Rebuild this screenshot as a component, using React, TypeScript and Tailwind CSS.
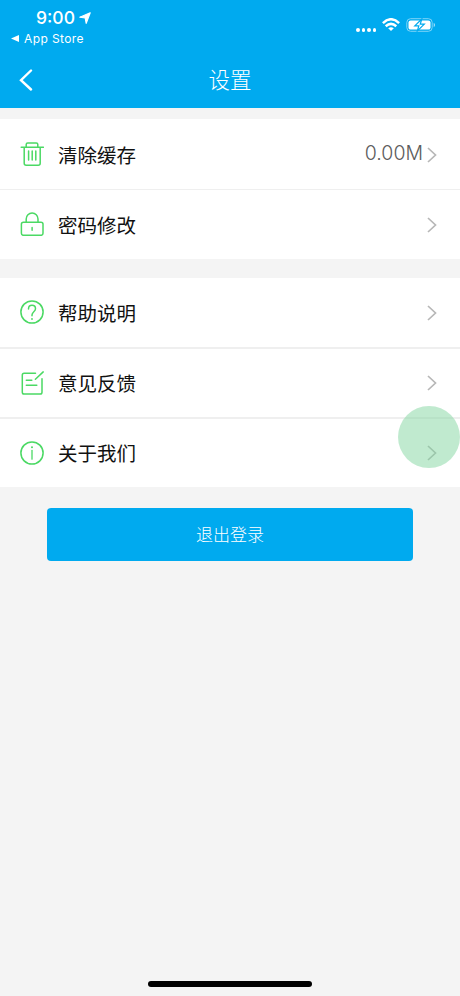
import type { ReactNode } from 'react';

const LocationIcon = () => (
  <svg className="h-[12px] w-[12px]" viewBox="0 0 12 12" fill="#fff">
    <path d="M11.2.8 7.2 11.3 6.2 6 .8 5.2Z" stroke="#fff" strokeWidth="1.2" strokeLinejoin="round" />
  </svg>
);

const WifiIcon = () => (
  <svg className="h-[14px] w-[18px]" viewBox="0 0 18 14" fill="none" stroke="#fff" strokeWidth="2.5">
    <path d="M.9 5.1Q9-2.6 17.1 5.1" />
    <path d="M3.7 8.3Q9 3.5 14.3 8.3" />
    <path d="M6.2 10.3Q9 8 11.8 10.3L9 13.1Z" fill="#fff" stroke="none" />
  </svg>
);

const BatteryIcon = () => (
  <svg className="h-[14px] w-[30px]" viewBox="0 0 30 14" fill="none">
    <rect x=".8" y=".7" width="25.4" height="12.6" rx="3.8" stroke="#7fd4f7" />
    <rect x="2.5" y="2.4" width="22" height="9.2" rx="2.2" fill="#fff" />
    <path d="M27.7 4.8v4.4q1.4-.7 1.4-2.2t-1.4-2.2" fill="#9bdcf8" />
    <path d="m15.8 1-7 6.8h4L11.3 13l7-6.8h-4Z" fill="#fff" stroke="#00aaef" strokeWidth="1.2" />
  </svg>
);

const iconProps = {
  className: 'mb-[1px] h-6 w-6 shrink-0',
  viewBox: '0 0 24 24',
  fill: 'none',
  stroke: '#4bd964',
  strokeWidth: 1.5,
  strokeLinecap: 'round',
  strokeLinejoin: 'round',
} as const;

const TrashIcon = () => (
  <svg {...iconProps}>
    <path d="M1.2 5.3h22.2M6.2 5V2.5q0-1.5 1.5-1.5h8.6q1.5 0 1.5 1.5V5M4.2 5.6v15.6q0 2 2 2h12q2 0 2-2V5.6" />
    <path d="M8.6 9v9M12.2 9v9M15.8 9v9" />
  </svg>
);

const LockIcon = () => (
  <svg {...iconProps}>
    <rect x="1.4" y="10.3" width="21.6" height="13" rx="2" />
    <path d="M6.2 10V6.9a5.9 5.9 0 0 1 11.8 0V10M12.1 15.5v2.7" />
  </svg>
);

const HelpIcon = () => (
  <svg {...iconProps}>
    <circle cx="12" cy="12" r="11.1" />
    <path d="M8.5 8.9c0-2.2 1.5-3.6 3.5-3.6s3.5 1.4 3.5 3.4c0 3-3.5 3.1-3.5 6.3v.7" />
    <circle cx="12" cy="19" r=".9" fill="#4bd964" stroke="none" />
  </svg>
);

const FeedbackIcon = () => (
  <svg {...iconProps}>
    <path d="M15.5 2.2H4.1q-1.8 0-1.8 1.8v17.3q0 1.8 1.8 1.8h16.1q1.8 0 1.8-1.8V7.8" />
    <path d="M23.2.9 15.4 8.2M6.3 9.3h5.5M6.3 14.3h10.5" />
  </svg>
);

const InfoIcon = () => (
  <svg {...iconProps}>
    <circle cx="12" cy="12" r="11.1" />
    <path d="M12 9.5v8.7" strokeWidth="1.3" />
    <circle cx="12" cy="6.2" r="1" fill="#4bd964" stroke="none" />
  </svg>
);

const Chevron = () => (
  <svg className="h-4 w-[10px] shrink-0" viewBox="0 0 10 16" fill="none" stroke="#b7b7b7" strokeWidth="1.7">
    <path d="M1 1 8.5 8 1 15" />
  </svg>
);

type RowProps = {
  icon: ReactNode;
  label: string;
  value?: string;
  className: string;
};

const Row = ({ icon, label, value, className }: RowProps) => (
  <li className={`flex items-center border-[#efefef] bg-white pr-[23px] pl-5 ${className}`}>
    {icon}
    <span className="mt-[2px] ml-[14px] flex-1 text-[19.5px] leading-7 text-[#111]">{label}</span>
    {value && <span className="mt-[-3px] mr-[4px] text-[19.5px] leading-7 font-light text-[#5c5c5c]">{value}</span>}
    <Chevron />
  </li>
);

const App = () => {
  return (
    <div className="relative flex h-[996px] w-[460px] flex-col overflow-hidden bg-[#f4f4f4] font-['Inter','Noto_Sans_CJK_SC',sans-serif]">
      <header className="h-[108px] bg-[#00aaef] text-white">
        <div className="flex h-[52px] justify-between">
          <div className="pt-[7px]">
            <div className="flex items-center gap-[4px] pl-[36px]">
              <span className="text-[17.5px] leading-[21px] font-medium">9:00</span>
              <LocationIcon />
            </div>
            <div className="flex items-center gap-[5px] pt-[3px] pl-[11px]">
              <svg className="h-[7px] w-[8px]" viewBox="0 0 8 7" fill="#fff">
                <path d="M0 3.5 8 0v7Z" />
              </svg>
              <span className="text-[12px] leading-[15px] tracking-[0.4px]">App Store</span>
            </div>
          </div>
          <div className="flex items-start pt-[18px] pr-[24px]">
            <div className="mt-[10px] mr-[6px] flex gap-[2px]">
              <i className="size-[3.5px] rounded-full bg-white" />
              <i className="size-[3.5px] rounded-full bg-white" />
              <i className="size-[3.5px] rounded-full bg-white" />
              <i className="size-[3.5px] rounded-full bg-white" />
            </div>
            <WifiIcon />
            <div className="ml-[6px]">
              <BatteryIcon />
            </div>
          </div>
        </div>
        <div className="grid h-14 grid-cols-[1fr_auto_1fr] items-center">
          <button className="pl-[19px]" aria-label="返回">
            <svg className="h-[22px] w-[14px]" viewBox="0 0 14 22" fill="none" stroke="#fff" strokeWidth="2.4" strokeLinecap="round">
              <path d="M12 1.5 2 11.2 12 20.5" />
            </svg>
          </button>
          <h1 className="text-[21.5px] leading-8 font-light">设置</h1>
        </div>
      </header>

      <ul className="mt-[11px]">
        <Row icon={<TrashIcon />} label="清除缓存" value="0.00M" className="h-[71px] border-b pt-[1px]" />
        <Row icon={<LockIcon />} label="密码修改" className="h-[69px]" />
      </ul>

      <ul className="mt-[19px]">
        <Row icon={<HelpIcon />} label="帮助说明" className="h-[71px] border-b-2" />
        <Row icon={<FeedbackIcon />} label="意见反馈" className="h-[70px] border-b-2" />
        <Row icon={<InfoIcon />} label="关于我们" className="h-[68px]" />
      </ul>

      <button className="mx-[47px] mt-[21px] h-[53px] rounded-[4px] bg-[#00aaef] pt-[2px] text-[17px] font-light text-white">
        退出登录
      </button>

      <div className="mx-auto mt-auto mb-[9px] h-[6px] w-[164px] rounded-full bg-black" />

      {/* touch indicator */}
      <div className="absolute top-[406px] left-[398px] size-[62px] rounded-full bg-[#82d5a0]/50" />
    </div>
  );
};

export default App;
